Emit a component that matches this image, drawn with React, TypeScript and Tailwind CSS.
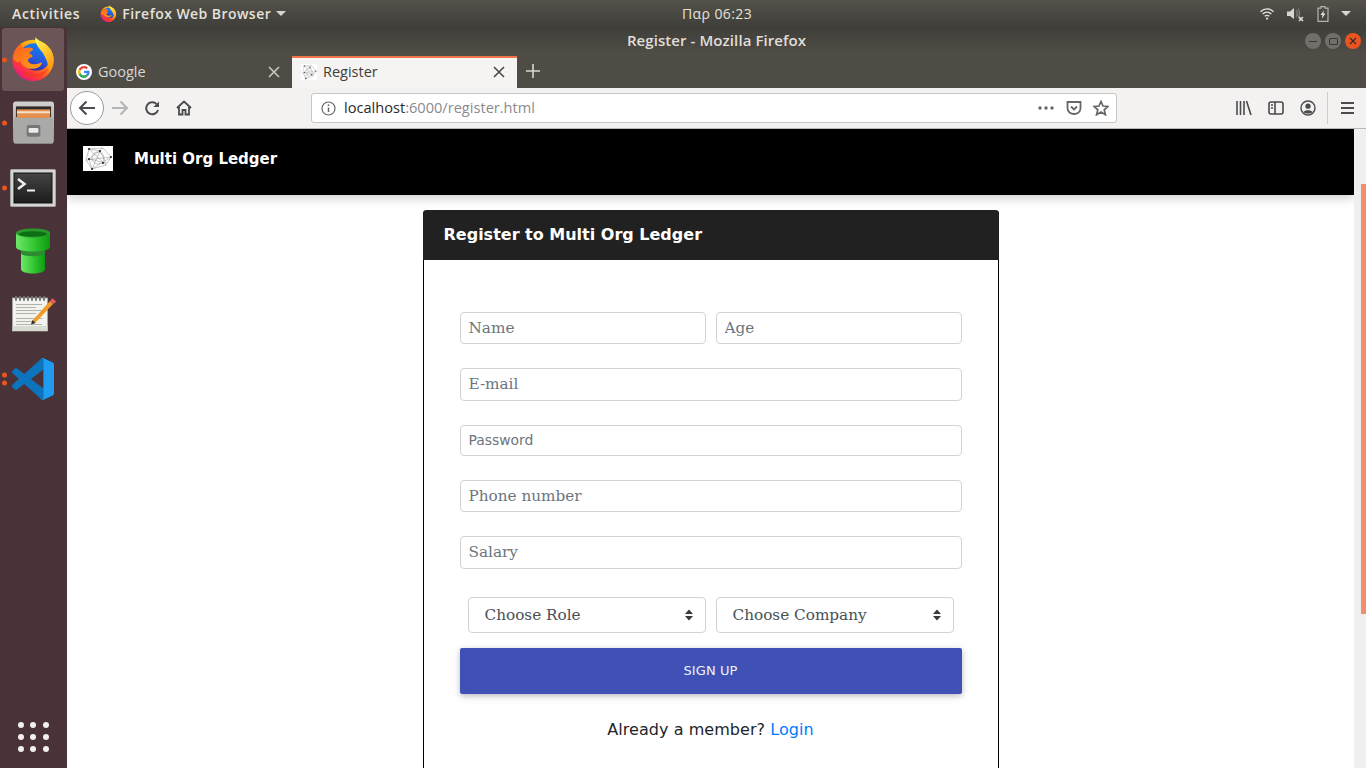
import { useId } from "react"

const uiFont = "font-['Open_Sans','Noto_Sans',sans-serif]"

function FirefoxLogo({ size }: { size: number }) {
  const id = useId()
  return (
    <svg width={size} height={size} viewBox="0 0 48 48">
      <defs>
        <linearGradient id={id + "a"} x1="0.85" y1="0.05" x2="0.2" y2="0.95">
          <stop offset="0" stopColor="#ffe21f" />
          <stop offset="0.4" stopColor="#ff980e" />
          <stop offset="0.75" stopColor="#ff3a3a" />
          <stop offset="1" stopColor="#e31587" />
        </linearGradient>
        <linearGradient id={id + "b"} x1="0.7" y1="0" x2="0.3" y2="1">
          <stop offset="0" stopColor="#0a84ff" />
          <stop offset="0.6" stopColor="#2b56d8" />
          <stop offset="1" stopColor="#3a1d96" />
        </linearGradient>
        <linearGradient id={id + "c"} x1="0.2" y1="0" x2="0.7" y2="1">
          <stop offset="0" stopColor="#fff44f" />
          <stop offset="1" stopColor="#ff980e" />
        </linearGradient>
        <linearGradient id={id + "d"} x1="0" y1="0" x2="1" y2="1">
          <stop offset="0" stopColor="#ff5a1f" />
          <stop offset="1" stopColor="#ffa516" />
        </linearGradient>
      </defs>
      <circle cx="23.5" cy="26" r="22" fill={`url(#${id}a)`} />
      <path d="M10 17 C14 7 30 5 37 12 C43 19 43 29 36 34 C29 39 18 37 14 30 Z" fill={`url(#${id}b)`} />
      <path d="M26 1 C30 6 37 8 41 13 C47 20 47 31 41 38 C40 31 38 24 34 18 C30 13 25 8 26 1 Z" fill={`url(#${id}c)`} />
      <path d="M2 24 C3 16 7 11 11 8 C11 11 12 13 14 13 C17 12 21 12 24 14 C22 16 20 17 19 18 C21 19 23 20 23 22 C20 23 18 24 18 26 C20 31 27 31 33 28 C33 32 28 35 23 35 C16 35 11 31 10 26 C8 29 5 28 2 24 Z" fill={`url(#${id}d)`} />
      <path d="M15 37 C22 42 33 41 40 34 C36 44 22 48 13 42 Z" fill="#f7371f" opacity="0.6" />
    </svg>
  )
}

function FilesIcon() {
  return (
    <svg width="41" height="44" viewBox="0 0 42 44">
      <defs>
        <linearGradient id="cabinet" x1="0" y1="0" x2="0" y2="1">
          <stop offset="0" stopColor="#d2d2d0" />
          <stop offset="1" stopColor="#8f8f8c" />
        </linearGradient>
      </defs>
      <rect x="0" y="0" width="42" height="43" rx="3" fill="url(#cabinet)" />
      <rect x="3" y="5" width="36" height="11" fill="#2f2b28" />
      <rect x="4" y="8" width="34" height="9" fill="#e4914f" />
      <rect x="4" y="10" width="34" height="2" fill="#f4e2c8" />
      <rect x="1" y="17" width="40" height="26" rx="1" fill="#a9a9a7" />
      <rect x="14" y="24" width="14" height="12" rx="2" fill="#77777a" />
      <rect x="16" y="27" width="10" height="5" rx="1" fill="#ecebe8" />
    </svg>
  )
}

function TerminalIcon() {
  return (
    <svg width="46" height="38" viewBox="0 0 46 38">
      <defs>
        <linearGradient id="screen" x1="0" y1="0" x2="0" y2="1">
          <stop offset="0" stopColor="#444" />
          <stop offset="1" stopColor="#1c1c1c" />
        </linearGradient>
      </defs>
      <rect x="0.5" y="0.5" width="45" height="37" rx="1" fill="#d4d4d2" stroke="#a5a5a3" />
      <rect x="4" y="4" width="38" height="30" fill="url(#screen)" stroke="#111" />
      <path d="M8 10 L14.5 15 L8 20" fill="none" stroke="#efefef" strokeWidth="2.5" />
      <rect x="17" y="20.5" width="8" height="2" fill="#efefef" />
    </svg>
  )
}

function PipeIcon() {
  return (
    <svg width="34" height="46" viewBox="0 0 34 46">
      <defs>
        <linearGradient id="pipe" x1="0" y1="0" x2="1" y2="0">
          <stop offset="0" stopColor="#6ee86a" />
          <stop offset="0.55" stopColor="#31c52f" />
          <stop offset="1" stopColor="#0d9a14" />
        </linearGradient>
      </defs>
      <path d="M5 20 H29 V41 C29 47 5 47 5 41 Z" fill="url(#pipe)" />
      <path d="M5 22 H29 V26 C24 29 10 29 5 26 Z" fill="#2b8c32" />
      <path d="M0 5 H34 V19 C34 25 0 25 0 19 Z" fill="url(#pipe)" />
      <ellipse cx="17" cy="5" rx="17" ry="4.5" fill="#2a9a2c" />
      <ellipse cx="17" cy="6" rx="14" ry="2.8" fill="#0d6f14" />
    </svg>
  )
}

function NotepadIcon() {
  return (
    <svg className="ml-[2px]" width="45" height="36" viewBox="0 0 45 36">
      <rect x="0.5" y="2" width="35" height="33" fill="#f2f2ee" stroke="#a8a8a4" strokeWidth="0.8" />
      <rect x="0.5" y="30" width="35" height="5" fill="#d8dbd2" />
      {[3, 7, 11, 15, 19, 23, 27, 31].map((x) => (
        <rect key={x} x={x} y="0" width="2" height="5" rx="1" fill="#777" />
      ))}
      {[8, 11, 14, 17, 22, 25, 28].map((y) => (
        <rect key={y} x="4" y={y} width={y % 2 ? 20 : 26} height="1" fill="#b3b3ae" />
      ))}
      <path d="M19 28 L21 24 L38 5 L41 8 L23 27 Z" fill="#f39a28" />
      <path d="M38 5 L40 2.5 C41 2 44 5 44 6 L41 8 Z" fill="#e25a5a" />
      <path d="M19 28.5 L20.5 24 L23.5 27 Z" fill="#2d2d2d" />
    </svg>
  )
}

function VsCodeIcon() {
  return (
    <svg width="42" height="42" viewBox="0 0 100 100">
      <path
        fillRule="evenodd"
        fill="#0b74bd"
        d="M70.9 99.3a6.2 6.2 0 0 0 5-.2l20.6-9.9a6.25 6.25 0 0 0 3.5-5.6V16.4a6.25 6.25 0 0 0-3.5-5.6L75.9.9a6.2 6.2 0 0 0-7.1 1.2L29.4 38 12.2 25a4.2 4.2 0 0 0-5.3.2l-5.5 5a4.2 4.2 0 0 0 0 6.2L16.3 50 1.4 63.6a4.2 4.2 0 0 0 0 6.2l5.5 5a4.2 4.2 0 0 0 5.3.2l17.2-13 39.4 35.9c1 1 2.2 1.8 3.5 2.4ZM75 27.3 45.1 50 75 72.7Z"
      />
      <path
        fill="#1f9cf0"
        d="M70.9 99.3a6.2 6.2 0 0 0 5-.2l20.6-9.9a6.25 6.25 0 0 0 3.5-5.6V16.4a6.25 6.25 0 0 0-3.5-5.6L75.9.9a6.2 6.2 0 0 0-7.1 1.2 3.6 3.6 0 0 1 6.2 2.6v90.6a3.6 3.6 0 0 1-6.2 2.6c.6.6 1.3 1 2.1 1.4Z"
      />
    </svg>
  )
}

function LedgerMark({ className }: { className: string }) {
  return (
    <svg className={className} viewBox="0 0 30 25" preserveAspectRatio="none">
      <rect width="30" height="25" fill="#fff" />
      <g fill="none" stroke="#8a8a8a" strokeWidth="0.5">
        <path d="M6 3 L20 2 L28 11 L23 19 L9 23 L3 14 Z" />
        <path d="M6 3 L17 5 L23 17 L6 13 L9 23 L17 5 M20 2 L6 13 M28 11 L9 23 M3 14 L28 11 M6 3 L23 19" />
        <circle cx="15" cy="12" r="6" />
      </g>
      <g fill="#1a1a1a">
        <circle cx="6" cy="3" r="1" />
        <circle cx="17" cy="5" r="1" />
        <circle cx="28" cy="11" r="1" />
        <circle cx="20" cy="17" r="1" />
        <circle cx="6" cy="13" r="1" />
        <circle cx="9" cy="23" r="1" />
      </g>
    </svg>
  )
}

function GoogleG() {
  return (
    <svg width="16" height="16" viewBox="0 0 48 48">
      <circle cx="24" cy="24" r="24" fill="#fff" />
      <path fill="#ea4335" d="M24 13c3 0 5 1 7 3l5-5c-3-3-7-5-12-5-7 0-13 4-16 10l6 4c1-4 5-7 10-7z" />
      <path fill="#4285f4" d="M41 24c0-1 0-3-1-4H24v7h9c0 2-2 4-4 5l6 5c4-3 6-8 6-13z" />
      <path fill="#fbbc05" d="M14 27c-1-2-1-4 0-6l-6-5c-3 5-3 11 0 16l6-5z" />
      <path fill="#34a853" d="M24 42c5 0 9-2 11-5l-6-5c-1 1-3 2-5 2-5 0-9-3-10-7l-6 5c3 6 9 10 16 10z" />
    </svg>
  )
}

function CloseGlyph({ color }: { color: string }) {
  return (
    <svg width="12" height="12" viewBox="0 0 12 12" fill="none" stroke={color} strokeWidth="1.6">
      <path d="M1 1 L11 11 M11 1 L1 11" />
    </svg>
  )
}

function DockItem({ dots = 0, active = false, children }: { dots?: number; active?: boolean; children: React.ReactNode }) {
  return (
    <div className={`relative mx-[2px] flex h-[63px] w-[62px] items-center justify-center rounded-[3px] ${active ? "bg-[#6b5557]" : ""}`}>
      {dots > 0 && (
        <div className="absolute left-[-0.5px] top-1/2 flex -translate-y-1/2 flex-col gap-[3px]">
          {Array.from({ length: dots }).map((_, i) => (
            <span key={i} className="block h-[5px] w-[5px] rounded-full bg-[#e95420]" />
          ))}
        </div>
      )}
      {children}
    </div>
  )
}

function Dock() {
  return (
    <aside className="flex h-full w-[67px] shrink-0 flex-col bg-[#4a3338] pt-[1px]">
      <DockItem dots={1} active><span className="mb-[2px]"><FirefoxLogo size={45} /></span></DockItem>
      <DockItem dots={1}><FilesIcon /></DockItem>
      <div className="h-[2px]" />
      <DockItem dots={1}><TerminalIcon /></DockItem>
      <DockItem><PipeIcon /></DockItem>
      <DockItem><NotepadIcon /></DockItem>
      <div className="h-[2px]" />
      <DockItem dots={2}><VsCodeIcon /></DockItem>
      <div className="mt-auto mb-[16px] grid w-[31px] grid-cols-3 gap-[6px] self-center">
        {Array.from({ length: 9 }).map((_, i) => (
          <span key={i} className="block h-[6px] w-[6px] rounded-full bg-[#f2f0f0]" />
        ))}
      </div>
    </aside>
  )
}

function TopBar() {
  return (
    <header className={`relative flex h-[27px] items-center bg-gradient-to-b from-[#55524b] to-[#3f3e39] text-[14px] font-semibold text-[#e4e2dc] ${uiFont}`}>
      <span className="ml-[12px] tracking-[0.7px]">Activities</span>
      <span className="ml-[20px] flex items-center">
        <FirefoxLogo size={17} />
        <span className="ml-[5px] tracking-[0.45px]">Firefox Web Browser</span>
        <span className="ml-[5px] h-0 w-0 border-x-[5px] border-t-[5px] border-x-transparent border-t-[#d8d6d0]" />
      </span>
      <span className="absolute left-[682px] font-normal tracking-[0.4px]">Παρ 06:23</span>
      <div className="ml-auto mr-[15px] flex items-center">
        <svg width="14" height="12" viewBox="0 0 15 13" fill="none" stroke="#e4e2dc" strokeWidth="1.5">
          <path d="M0.5 4 C4.5 0 10.5 0 14.5 4" />
          <path d="M2.8 6.5 C5.5 4 9.5 4 12.2 6.5" />
          <path d="M5 9 C6.5 7.8 8.5 7.8 10 9" />
          <circle cx="7.5" cy="11.5" r="1.2" fill="#e4e2dc" stroke="none" />
        </svg>
        <svg className="ml-[13px]" width="17" height="16" viewBox="0 0 17 16" fill="none">
          <path d="M0 5.5 H3 L7 2 V13 L3 10 H0 Z" fill="#d8d6d0" />
          <path d="M9 4 C10.5 6 10.5 9 9 11 M11 2.5 C13 5 13 10 11 12.5" stroke="#85827b" strokeWidth="1.2" />
          <path d="M12 11 L16 15 M16 11 L12 15" stroke="#e4e2dc" strokeWidth="1.5" />
        </svg>
        <svg className="ml-[13px]" width="12" height="16" viewBox="0 0 12 15" preserveAspectRatio="none">
          <path d="M4 0.5 H8 V2 H11 V14.5 H1 V2 H4 Z" fill="none" stroke="#b5b3ad" strokeWidth="1.2" />
          <path d="M7 4 L3.5 8.5 H5.5 L4.8 12 L8.5 7 H6.3 Z" fill="#e4e2dc" />
        </svg>
        <span className="ml-[12px] h-0 w-0 border-x-[5px] border-t-[5px] border-x-transparent border-t-[#d8d6d0]" />
      </div>
    </header>
  )
}

function TitleBar() {
  return (
    <div className={`relative flex h-[27px] items-center justify-center bg-gradient-to-b from-[#3f3e39] to-[#504d46] text-[15px] font-semibold tracking-[0.08px] text-[#e0ded8] ${uiFont}`}>
      Register - Mozilla Firefox
      <div className="absolute right-[5px] top-[6px] flex gap-[4px]">
        <span className="flex h-[16px] w-[16px] items-center justify-center rounded-full bg-[#716f69]">
          <span className="h-[1px] w-[8px] bg-[#37362f]" />
        </span>
        <span className="flex h-[16px] w-[16px] items-center justify-center rounded-full bg-[#716f69]">
          <span className="h-[7px] w-[9px] rounded-[1px] border border-[#37362f]" />
        </span>
        <span className="flex h-[16px] w-[16px] items-center justify-center rounded-full bg-[#e95420]">
          <svg width="8" height="8" viewBox="0 0 8 8" stroke="#3a2a20" strokeWidth="1.2"><path d="M1 1 L7 7 M7 1 L1 7" /></svg>
        </span>
      </div>
    </div>
  )
}

function TabStrip() {
  return (
    <div className={`flex h-[34px] bg-[#4f4c45] text-[14.5px] ${uiFont}`}>
      <div className="flex w-[225px] items-center px-[9px] pt-[2px] text-[#d8d6d2]">
        <GoogleG />
        <span className="ml-[6px]">Google</span>
        <span className="ml-auto mr-[3px]"><CloseGlyph color="#c9c7c2" /></span>
      </div>
      <div className="mt-[2px] flex w-[225px] items-center border-t-2 border-[#f0764a] bg-[#f5f4f2] px-[9px] pb-[3px] text-[#3f3e39]">
        <LedgerMark className="h-[16px] w-[16px]" />
        <span className="ml-[6px]">Register</span>
        <span className="ml-auto mr-[3px]"><CloseGlyph color="#4a4a48" /></span>
      </div>
      <div className="ml-[9px] flex items-center">
        <svg width="14" height="14" viewBox="0 0 14 14" stroke="#d8d6d2" strokeWidth="1.6"><path d="M7 0 V14 M0 7 H14" /></svg>
      </div>
    </div>
  )
}

function Toolbar() {
  const ink = "#4a4a4f"
  return (
    <div className={`flex h-[41px] items-center border-b border-[#b9b7b3] bg-[#f3f2f0] text-[14.6px] ${uiFont}`}>
      <div className="ml-[3px] flex h-[34px] w-[34px] items-center justify-center rounded-full border border-[#9a9a9a] bg-white">
        <svg width="18" height="16" viewBox="0 0 18 16" fill="none" stroke={ink} strokeWidth="2"><path d="M17 8 H2 M8.5 1.5 L2 8 L8.5 14.5" /></svg>
      </div>
      <svg className="ml-[7px]" width="18" height="16" viewBox="0 0 18 16" fill="none" stroke="#b4b4b4" strokeWidth="2"><path d="M1 8 H16 M9.5 1.5 L16 8 L9.5 14.5" /></svg>
      <svg className="ml-[16px]" width="15" height="15" viewBox="0 0 15 15" fill="none" stroke={ink} strokeWidth="2"><path d="M13 9 A6 6 0 1 1 11.5 3" /><path d="M14 0.5 V6 H8.5" fill={ink} stroke="none" /></svg>
      <svg className="ml-[16px]" width="16" height="16" viewBox="0 0 16 16" fill="none" stroke={ink} strokeWidth="1.8"><path d="M1 8 L8 1.5 L15 8 M3 6.5 V14.5 H6.5 V10 H9.5 V14.5 H13 V6.5" /></svg>
      <div className="ml-[119px] flex h-[30px] w-[806px] items-center rounded-[3px] border border-[#c6c6c6] bg-white px-[9px]">
        <svg width="15" height="15" viewBox="0 0 15 15" fill="none" stroke="#666" strokeWidth="1.2"><circle cx="7.5" cy="7.5" r="6.5" /><path d="M7.5 6.5 V11" strokeWidth="1.5" /><circle cx="7.5" cy="4.2" r="0.9" fill="#666" stroke="none" /></svg>
        <span className="ml-[8px] text-[#2b2b2b]">localhost<span className="text-[#8a8a8f]">:6000/register.html</span></span>
        <span className="ml-auto flex items-center">
          <svg width="16" height="4" viewBox="0 0 16 4" fill="#666"><circle cx="2" cy="2" r="1.7" /><circle cx="8" cy="2" r="1.7" /><circle cx="14" cy="2" r="1.7" /></svg>
          <svg className="ml-[12px]" width="16" height="15" viewBox="0 0 16 15" fill="none" stroke="#666" strokeWidth="1.8"><path d="M1.5 1 H14.5 V7 C14.5 15 1.5 15 1.5 7 Z" /><path d="M5 5.5 L8 8.5 L11 5.5" /></svg>
          <svg className="ml-[11px] mr-[-2px]" width="16" height="16" viewBox="0 0 16 16" fill="none" stroke="#666" strokeWidth="1.7"><path d="M8 1.5 L10 6 L15 6.5 L11.2 9.8 L12.4 14.7 L8 12 L3.6 14.7 L4.8 9.8 L1 6.5 L6 6 Z" /></svg>
        </span>
      </div>
      <svg className="ml-[119px]" width="16" height="14" viewBox="0 0 16 14" fill="none" stroke={ink} strokeWidth="1.6"><path d="M1 0 V14 M4.5 0 V14 M8 0 V14 M10.5 0 L15 14" /></svg>
      <svg className="ml-[16px]" width="16" height="14" viewBox="0 0 16 14" fill="none" stroke={ink} strokeWidth="1.6"><rect x="1" y="1" width="14" height="12" rx="2" /><path d="M7 1 V13 M3 4 H5 M3 7 H5" /></svg>
      <svg className="ml-[16px]" width="16" height="16" viewBox="0 0 16 16" fill="none" stroke={ink} strokeWidth="1.4"><circle cx="8" cy="8" r="7" /><circle cx="8" cy="6.2" r="2.6" fill={ink} stroke="none" /><path d="M3.5 12 C5 9.5 11 9.5 12.5 12 C11 14 5 14 3.5 12 Z" fill={ink} stroke="none" /></svg>
      <span className="ml-[11px] h-[32px] w-px bg-[#cfcdc9]" />
      <svg className="ml-[13px]" width="13" height="12" viewBox="0 0 13 12" stroke={ink} strokeWidth="1.8"><path d="M0 1 H13 M0 6 H13 M0 11 H13" /></svg>
    </div>
  )
}

const fieldBase =
  "block w-full rounded-[4px] border border-[#ced4da] bg-white px-[8px] text-[#495057] outline-none placeholder:text-[#6c757d] placeholder:opacity-100"
const serifField = `${fieldBase} font-['DejaVu_Serif',serif] text-[15.25px]`

function RegisterCard() {
  return (
    <section className="mx-auto mt-[15px] w-[576px] rounded-t-[4px] border-x border-black font-['DejaVu_Sans',sans-serif]">
      <h1 className="-mx-px flex h-[50px] items-center rounded-t-[4px] bg-[#212121] pl-[21px] text-[16px] font-bold text-white">
        Register to Multi Org Ledger
      </h1>
      <form className="flex flex-col px-[36px] pb-[60px] pt-[52px]">
        <div className="flex gap-[10px]">
          <input className={`${serifField} h-[32px]`} placeholder="Name" />
          <input className={`${serifField} h-[32px]`} placeholder="Age" />
        </div>
        <input className={`${serifField} mt-[24px] h-[33px] pb-[2px]`} placeholder="E-mail" />
        <input className={`${fieldBase} mt-[24px] h-[31px] pb-[2px] font-['DejaVu_Sans',sans-serif] text-[13.9px]`} placeholder="Password" />
        <input className={`${serifField} mt-[24px] h-[32px]`} placeholder="Phone number" />
        <input className={`${serifField} mt-[24px] h-[33px] pb-[2px]`} placeholder="Salary" />
        <div className="mt-[28px] flex gap-[10px] px-[8px]">
          {["Choose Role", "Choose Company"].map((label) => (
            <div key={label} className="relative flex-1">
              <select className={`${serifField} h-[36px] appearance-none pl-[16px]`}>
                <option>{label}</option>
              </select>
              <svg className="absolute right-[13px] top-[12px]" width="8" height="12" viewBox="0 0 8 12" fill="#343a40">
                <path d="M4 0.5 L8 5 H0 Z M4 11.5 L0 7 H8 Z" />
              </svg>
            </div>
          ))}
        </div>
        <button type="button" className="mt-[15px] h-[46px] rounded-[2px] bg-[#3f51b5] text-[13px] uppercase tracking-[0.1px] text-[#f0f1fa] shadow-[0_2px_5px_0_rgba(0,0,0,0.16),0_2px_10px_0_rgba(0,0,0,0.12)]">
          Sign up
        </button>
        <p className="mt-[26px] text-center text-[16px] leading-[20px] tracking-[0.05px] text-[#212529]">
          Already a member? <a className="text-[#007bff]">Login</a>
        </p>
      </form>
    </section>
  )
}

function PageView() {
  return (
    <div className="flex min-h-0 flex-1">
      <main className="min-w-0 flex-1 overflow-hidden bg-white">
        <nav className="flex h-[66px] items-center bg-black pb-[7px] pl-[16px] shadow-[0_3px_10px_rgba(0,0,0,0.2)]">
          <LedgerMark className="h-[25px] w-[30px]" />
          <span className="ml-[21px] pt-[2px] font-['DejaVu_Sans',sans-serif] text-[15px] font-bold text-white">Multi Org Ledger</span>
        </nav>
        <RegisterCard />
      </main>
      <div className="flex w-[12px] shrink-0 justify-end bg-[#f0efed] pt-[55px]">
        <span className="block h-[430px] w-[5px] bg-[#f18e6c]" />
      </div>
    </div>
  )
}

export default function App() {
  return (
    <div className="flex h-[768px] w-[1366px] flex-col overflow-hidden">
      <TopBar />
      <div className="flex min-h-0 flex-1">
        <Dock />
        <div className="flex min-w-0 flex-1 flex-col">
          <TitleBar />
          <TabStrip />
          <Toolbar />
          <PageView />
        </div>
      </div>
    </div>
  )
}
